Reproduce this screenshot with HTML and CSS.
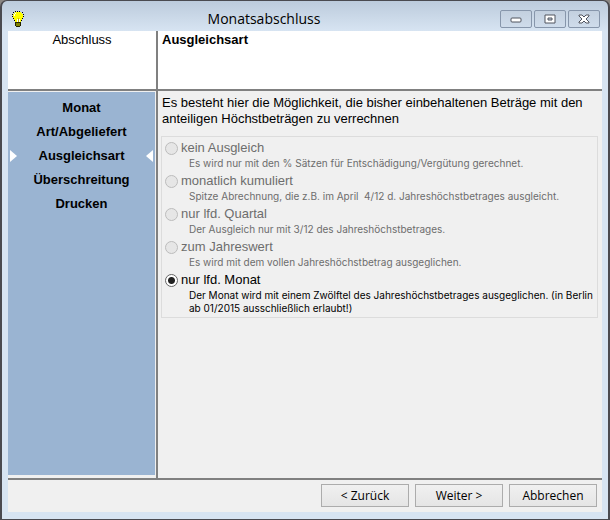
FILE: index.html
```html
<!DOCTYPE html>
<html lang="de">
<head>
  <meta charset="UTF-8" />
  <meta name="viewport" content="width=device-width, initial-scale=1.0"/>
  <title>Monatsabschluss</title>
  <link rel="stylesheet" href="styles.css">
</head>
<body>
  <div class="window">
    <!-- Title bar -->
    <header class="titlebar">
      <svg class="app-icon" width="12" height="16" viewBox="0 0 12 16" shape-rendering="crispEdges" aria-hidden="true">
        <path d="M3 1h6v1h1v1h1v4h-1v2H9v2H3V9H2V7H1V3h1V2h1z" fill="#ffff00"/>
        <path d="M3 0h1v1H3zM5 0h1v1H5zM7 0h1v1H7zM1 1h1v1H1zM10 1h1v1h-1zM0 3h1v1H0zM11 3h1v1h-1zM0 5h1v1H0zM11 5h1v1h-1zM1 7h1v1H1zM10 7h1v1h-1zM2 9h1v1H2zM9 9h1v1H9z" fill="#000"/>
        <path d="M2 3h1v2H2zM3 2h1v1H3zM5 8h1v3H5zM7 8h1v3H7z" fill="#fff"/>
        <path d="M6 7h1v4H6z" fill="#c8b400"/>
        <path d="M3 11h6v4H8v1H4v-1H3z" fill="#222200"/>
        <path d="M4 12h4v3H4z" fill="#808000"/>
      </svg>
      <h1>Monatsabschluss</h1>
      <div class="window-buttons">
        <button type="button" aria-label="Minimieren">
          <svg width="12" height="10" viewBox="0 0 12 10"><rect x="1" y="4" width="10" height="4" rx="1" fill="#fff" stroke="#50545f"/></svg>
        </button>
        <button type="button" aria-label="Maximieren">
          <svg width="12" height="10" viewBox="0 0 12 10"><path d="M1 1h10v8H1z" fill="#fff" stroke="#50545f"/><path d="M4 4h4v2H4z" fill="#c3d0df" stroke="#50545f"/></svg>
        </button>
        <button type="button" aria-label="Schließen">
          <svg width="12" height="10" viewBox="0 0 12 10"><path d="M1 1h3l2 2 2-2h3v1L8 5l3 3v1H8L6 7 4 9H1V8l3-3-3-3z" fill="#fff" stroke="#50545f"/></svg>
        </button>
      </div>
    </header>

    <form class="wizard">
      <div class="section-title">Abschluss</div>
      <h2 class="step-title">Ausgleichsart</h2>

      <!-- Wizard steps -->
      <nav class="sidebar">
        <ol class="steps">
          <li>Monat</li>
          <li>Art/Abgeliefert</li>
          <li class="active" aria-current="step">Ausgleichsart</li>
          <li>Überschreitung</li>
          <li>Drucken</li>
        </ol>
      </nav>

      <main class="content">
        <p class="intro" id="intro">Es besteht hier die Möglichkeit, die bisher einbehaltenen Beträge mit den anteiligen Höchstbeträgen zu verrechnen</p>

        <fieldset class="options" aria-labelledby="intro">
          <div class="option disabled">
            <input type="radio" name="ausgleich" id="kein" aria-describedby="kein-info" disabled>
            <label for="kein">kein Ausgleich</label>
            <p id="kein-info">Es wird nur mit den % Sätzen für Entschädigung/Vergütung gerechnet.</p>
          </div>
          <div class="option disabled">
            <input type="radio" name="ausgleich" id="kumuliert" aria-describedby="kumuliert-info" disabled>
            <label for="kumuliert">monatlich kumuliert</label>
            <p id="kumuliert-info">Spitze Abrechnung, die z.B. im April&nbsp; 4/12 d. Jahreshöchstbetrages ausgleicht.</p>
          </div>
          <div class="option disabled">
            <input type="radio" name="ausgleich" id="quartal" aria-describedby="quartal-info" disabled>
            <label for="quartal">nur lfd. Quartal</label>
            <p id="quartal-info">Der Ausgleich nur mit 3/12 des Jahreshöchstbetrages.</p>
          </div>
          <div class="option disabled">
            <input type="radio" name="ausgleich" id="jahr" aria-describedby="jahr-info" disabled>
            <label for="jahr">zum Jahreswert</label>
            <p id="jahr-info">Es wird mit dem vollen Jahreshöchstbetrag ausgeglichen.</p>
          </div>
          <div class="option">
            <input type="radio" name="ausgleich" id="monat" aria-describedby="monat-info" checked>
            <label for="monat">nur lfd. Monat</label>
            <p id="monat-info">Der Monat wird mit einem Zwölftel des Jahreshöchstbetrages ausgeglichen. (in Berlin ab 01/2015 ausschließlich erlaubt!)</p>
          </div>
        </fieldset>
      </main>

      <footer class="buttons">
        <button type="button">&lt; Zurück</button>
        <button type="button">Weiter &gt;</button>
        <button type="button">Abbrechen</button>
      </footer>
    </form>
  </div>
</body>
</html>
```

FILE: styles.css
```css
* {
  box-sizing: border-box;
}

body {
  margin: 0;
  background: #8a8683;
  font-family: "Liberation Sans", Arial, sans-serif;
  font-size: 13px;
  line-height: 16px;
  color: #000;
}

h1, h2, p, ol {
  margin: 0;
  padding: 0;
}

.window {
  display: flex;
  flex-direction: column;
  min-height: 100vh;
  padding: 0 6px 7px;
  border: 1px solid #4a4a50;
  border-width: 1px 2px 1px;
  border-radius: 7px 7px 0 0;
  background: linear-gradient(#bccbdc, #d7e4f2 30px);
}

/* Title bar */
.titlebar {
  display: grid;
  grid-template-columns: auto 1fr auto;
  align-items: center;
  height: 30px;
  padding: 6px 2px 0 4px;
}

.titlebar h1 {
  padding-left: 4px;
  font-family: "Open Sans", "Noto Sans", sans-serif;
  font-size: 14px;
  font-weight: normal;
  line-height: 20px;
  text-align: center;
}

.window-buttons {
  display: flex;
  gap: 2px;
}

.window-buttons button {
  display: flex;
  align-items: center;
  justify-content: center;
  width: 32px;
  height: 18px;
  padding: 0;
  border: 1px solid #8796ab;
  border-radius: 2px;
  background: linear-gradient(#c3d0df, #cfdceb);
}

/* Wizard panes */
.wizard {
  flex: 1;
  display: grid;
  grid-template-columns: 150px 1fr;
  grid-template-rows: 60px 1fr auto;
  background: #f0f0f0;
}

.section-title,
.step-title {
  border-bottom: 2px solid #808080;
  background: #fff;
  font-size: 13px;
  line-height: 18px;
}

.section-title {
  border-right: 2px solid #808080;
  text-align: center;
}

.step-title {
  padding-left: 4px;
}

.sidebar {
  display: flex;
  padding: 1px 1px 3px 0;
  border-right: 2px solid #808080;
}

.steps {
  flex: 1;
  padding: 4px 2px;
  background: #9ab4d2;
  font-weight: bold;
  line-height: 24px;
  list-style: none;
  text-align: center;
}

.steps .active {
  display: flex;
  align-items: center;
  justify-content: space-between;
}

/* Arrows on both sides of the current step */
.steps .active::before,
.steps .active::after {
  content: "";
  width: 7px;
  height: 12px;
  background: #fff;
  clip-path: polygon(0 0, 100% 50%, 0 100%);
}

.steps .active::after {
  clip-path: polygon(100% 0, 0 50%, 100% 100%);
}

.content {
  padding: 4px 4px 4px 3px;
}

.intro {
  padding-left: 1px;
}

.options {
  display: flex;
  flex-direction: column;
  gap: 2px;
  margin: 9px 0 0;
  padding: 2px 3px;
  border: 1px solid #dcdcdc;
}

.option {
  display: grid;
  grid-template-columns: 13px 1fr;
  column-gap: 3px;
  align-items: center;
  line-height: 18px;
}

.option p {
  grid-column: 2;
  padding-left: 8px;
  font-family: Inter, "Liberation Sans", sans-serif;
  font-size: 10px;
  line-height: 13px;
}

.option.disabled {
  color: #6d6d6d;
}

.option input {
  appearance: none;
  width: 13px;
  height: 13px;
  margin: 0;
  border: 1px solid #666;
  border-radius: 50%;
  background: #fff;
}

.option input:checked {
  background: radial-gradient(circle, #222 3px, #fff 4px);
}

.option input:disabled {
  border-color: #bcbcbc;
  background: #e6e6e6;
}

.buttons {
  grid-column: 1 / -1;
  display: flex;
  justify-content: flex-end;
  gap: 6px;
  padding: 4px 5px 5px;
  border-top: 2px solid #808080;
}

.buttons button {
  width: 88px;
  height: 23px;
  padding: 0;
  border: 1px solid #acacac;
  background: linear-gradient(#f0f0f0, #e5e5e5);
  font-family: "Open Sans", "Noto Sans", sans-serif;
  font-size: 12px;
  color: #000;
}
```
